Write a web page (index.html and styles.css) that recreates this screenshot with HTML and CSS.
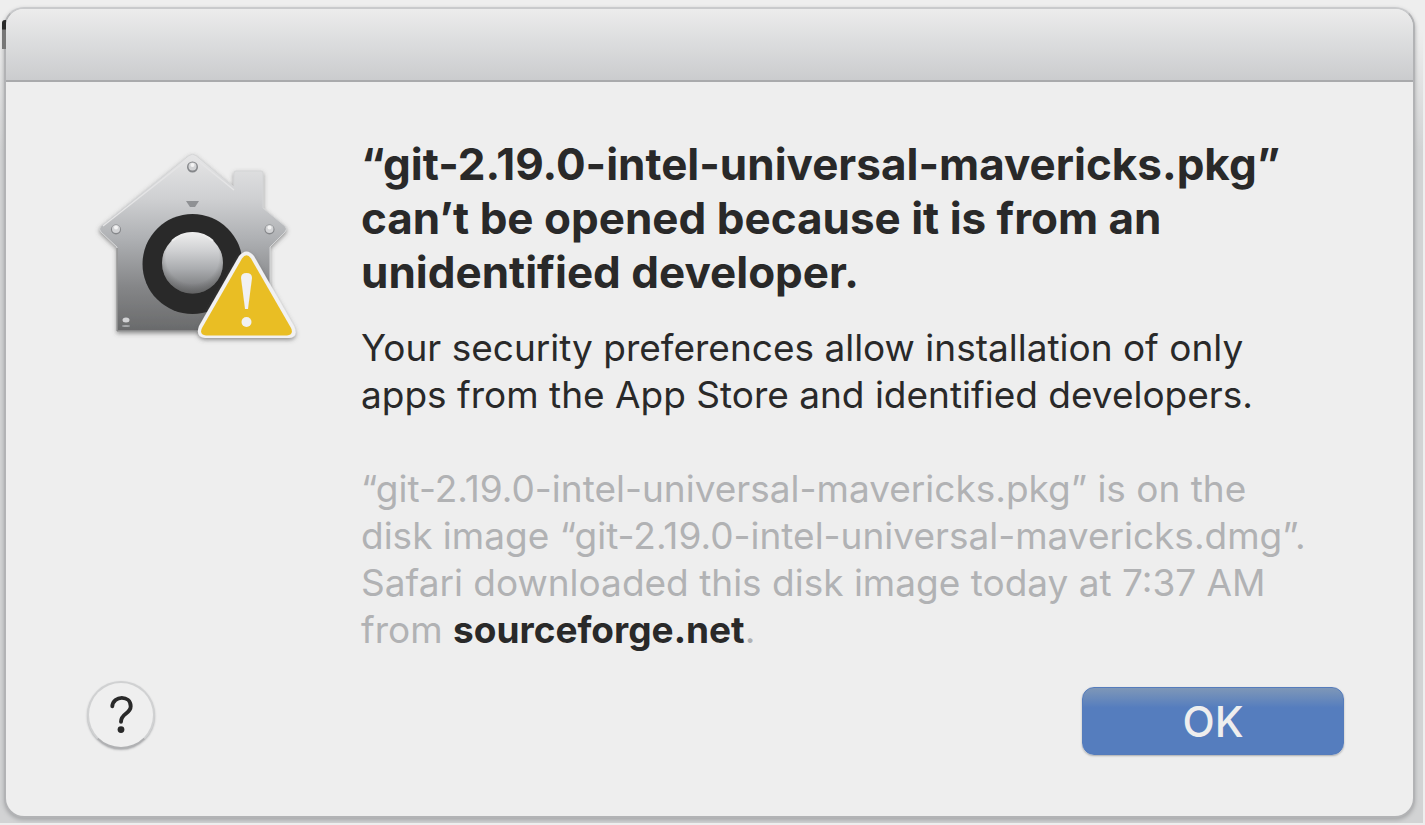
FILE: index.html
```html
<!DOCTYPE html>
<html lang="en">
<head>
<meta charset="utf-8">
<meta name="viewport" content="width=device-width, initial-scale=1">
<title>Unidentified developer</title>
<link rel="stylesheet" href="styles.css">
</head>
<body>
<span class="backdrop-mark"></span>
<main class="dialog" role="alertdialog" aria-labelledby="title" aria-describedby="message">
  <header class="titlebar"></header>
  <div class="content">
    <svg class="icon" viewBox="92 146 212 204" aria-hidden="true">
      <defs>
        <linearGradient id="metal" x1="0" y1="0" x2="0" y2="1">
          <stop offset="0" stop-color="#e6e6e7"/>
          <stop offset=".25" stop-color="#cfd0d2"/>
          <stop offset=".48" stop-color="#aeb0b3"/>
          <stop offset=".75" stop-color="#858688"/>
          <stop offset="1" stop-color="#696a6b"/>
        </linearGradient>
        <linearGradient id="knob" x1="0" y1="0" x2="0" y2="1">
          <stop offset="0" stop-color="#eeeeee"/>
          <stop offset=".3" stop-color="#cfd0d2"/>
          <stop offset=".6" stop-color="#aaacaf"/>
          <stop offset="1" stop-color="#707173"/>
        </linearGradient>
        <radialGradient id="edge" cy=".4" r=".62">
          <stop offset=".7" stop-color="#555" stop-opacity="0"/>
          <stop offset="1" stop-color="#555" stop-opacity=".6"/>
        </radialGradient>
        <filter id="shadow" x="-10%" y="-10%" width="120%" height="125%">
          <feDropShadow dx="0" dy="2" stdDeviation="2" flood-color="#555" flood-opacity=".6"/>
        </filter>
      </defs>
      <path filter="url(#shadow)" fill="url(#metal)" stroke="#d4d5d6" stroke-width="1" d="M189 155.500Q192.500 153 196 155.500L234 187V173Q234 171 236 171H261Q263 171 263 173V208L285 226Q288 229 285 232L270 247V331H117V247L101 232Q98 229 101 226Z"/>
      <path d="M117 248V331H270" fill="none" stroke="#777" stroke-width="1"/>
      <path d="M103 226L192 156L234 190" fill="none" stroke="#e4e4e5" stroke-width="1.500"/>
      <path d="M186 201H199L195 207H190Z" fill="#8f9194"/>
      <circle cx="192.500" cy="264" r="50" fill="#292929"/>
      <circle cx="192.500" cy="263" r="30.500" fill="url(#knob)"/>
      <circle cx="192.500" cy="263" r="30.500" fill="url(#edge)"/>
      <path d="M172 241A30 30 0 0 1 213 241" fill="none" stroke="#ececec" stroke-width="2"/>
      <g fill="#85878a"><circle cx="192.500" cy="167" r="5.500"/><circle cx="116" cy="229.500" r="5"/><circle cx="269.500" cy="229.500" r="5"/></g>
      <g fill="#d2d3d5"><circle cx="192.500" cy="166.500" r="4"/><circle cx="116" cy="229" r="4"/><circle cx="269.500" cy="229" r="4"/><ellipse cx="126" cy="320" rx="3.500" ry="2.500"/><ellipse cx="126" cy="326" rx="4" ry="1" fill="#a6a8aa"/></g>
      <g fill="#f4f4f4"><circle cx="192.500" cy="165" r="2"/><circle cx="116" cy="227.500" r="2"/><circle cx="269.500" cy="227.500" r="2"/></g>
      <path filter="url(#shadow)" d="M239 256Q246.500 247 254 256L294 326Q299 337 289 338H205Q195 337 199 326Z" fill="#f1f1f2"/>
      <path d="M242 258.500Q246.500 252 251 258.500L291 328Q294 334.500 287 335.500H206Q199 334.500 202 328Z" fill="#e9be24"/>
      <path d="M241 278Q241 273 246.500 273T252 278L248 309H245Z" fill="#f1f1f2"/>
      <circle cx="246.500" cy="322" r="5" fill="#f1f1f2"/>
    </svg>
    <div class="text">
      <h1 id="title">“git-2.19.0-intel-universal-mavericks.pkg”<br>can’t be opened because it is from an<br>unidentified developer.</h1>
      <p id="message">Your security preferences allow installation of only<br>apps from the App Store and identified developers.</p>
      <p class="origin">“git-2.19.0-intel-universal-mavericks.pkg” is on the<br>disk image “git-2.19.0-intel-universal-mavericks.dmg”.<br>Safari downloaded this disk image today at 7:37 AM<br>from <strong>sourceforge.net</strong>.</p>
    </div>
  </div>
  <footer class="actions">
    <button class="help" type="button" aria-label="Help">
      <svg viewBox="0 0 66 66" aria-hidden="true"><path d="M24 24C25 12.500 43 12.500 43 24C43 32 33 31 33 40" fill="none" stroke="#292929" stroke-width="4" stroke-linecap="round"/><circle cx="33" cy="48" r="3.500" fill="#292929"/></svg>
    </button>
    <button class="ok" type="button">OK</button>
  </footer>
</main>
</body>
</html>
```
FILE: styles.css
```css
* {
  box-sizing: border-box;
}

body {
  margin: 0;
  min-height: 100vh;
  padding: 7px 8px 5px 4px;
  display: flex;
  background: linear-gradient(#eeeeee 0, #eeeeee 30px, #d2d3d4 150px);
  border: solid #eeeeee;
  border-width: 0 2px 2px 0;
  font-family: Inter, "Liberation Sans", sans-serif;
  color: #292929;
}

.backdrop-mark {
  position: absolute;
  left: 2px;
  top: 20px;
  width: 4px;
  height: 29px;
  border-radius: 3px 0 0 0;
  background: linear-gradient(#292929 9px, #777777 10px);
}

.dialog {
  flex: 1;
  display: flex;
  flex-direction: column;
  overflow: hidden;
  background: #eeeeee;
  border: 2px solid #b2b3b5;
  border-top-color: #c9cacc;
  border-radius: 20px;
  box-shadow: 0 2px 4px #a5a6a8;
}

.titlebar {
  height: 73px;
  flex: none;
  background: linear-gradient(#ececec, #dedfe0 40%, #cbccce);
  border-bottom: 2px solid #a9aaac;
}

.content {
  display: flex;
  gap: 57px;
  padding: 55px 40px 0 86px;
}

.icon {
  flex: none;
  width: 212px;
  height: 204px;
  margin-top: 9px;
}

.text {
  white-space: nowrap;
}

h1 {
  margin: 0 0 25px;
  font-size: 44px;
  line-height: 54px;
  font-weight: 700;
}

p {
  margin: 0;
  font-size: 37px;
  line-height: 47px;
}

.origin {
  margin-top: 47px;
  color: #b1b2b4;
}

.origin strong {
  color: #292929;
  font-weight: 700;
}

.actions {
  display: flex;
  align-items: center;
  justify-content: space-between;
  margin-top: auto;
  padding: 0 69px 55px 81px;
}

.help {
  width: 68px;
  height: 68px;
  margin-bottom: 12px;
  padding: 0;
  border: 2px solid #d0d1d2;
  border-bottom-color: #b0b1b3;
  border-radius: 50%;
  background: #efefef;
  box-shadow: 0 1px 2px #b0b1b3;
}

.help svg {
  display: block;
  width: 100%;
}

.ok {
  width: 262px;
  height: 68px;
  padding: 0;
  border: 1px solid #557cbc;
  border-radius: 12px;
  background: linear-gradient(#7e97b8, #557dbe 30%);
  box-shadow: 0 1px 2px #a9aaac;
  color: #eeeeee;
  font-family: inherit;
  font-size: 42px;
  font-weight: 500;
}
```
